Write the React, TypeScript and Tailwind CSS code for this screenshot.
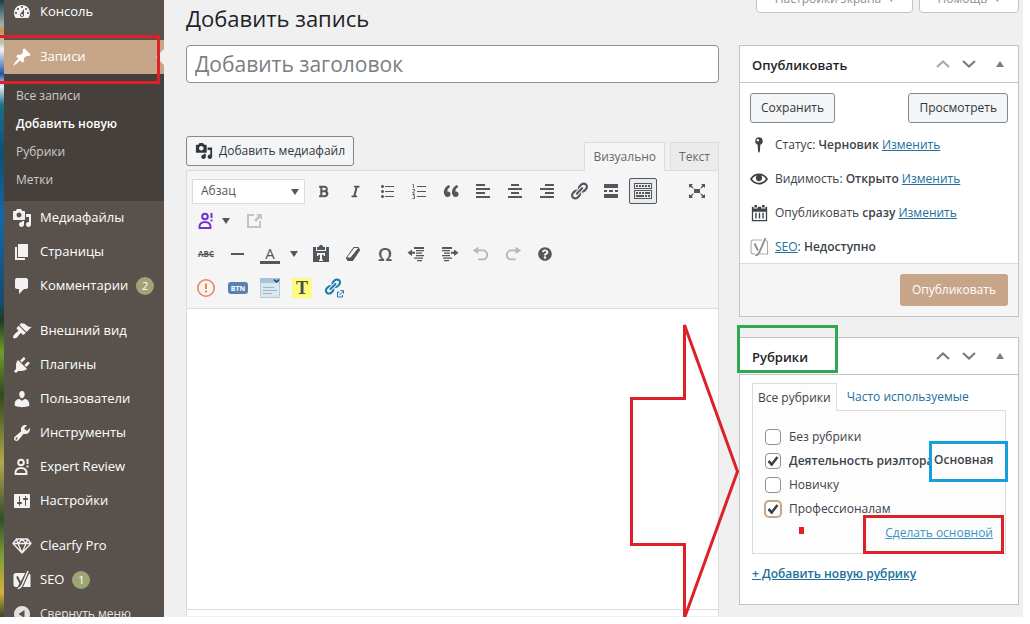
import type { ReactNode } from "react";
import { FaBold, FaItalic, FaQuestionCircle } from "react-icons/fa";

const paths = {
  dashboard:
    "M3.76 16h12.48c1.1-1.37 1.76-3.11 1.76-5 0-4.42-3.58-8-8-8s-8 3.58-8 8c0 1.89.66 3.63 1.76 5zM10 4c.55 0 1 .45 1 1s-.45 1-1 1-1-.45-1-1 .45-1 1-1zM6 6c.55 0 1 .45 1 1s-.45 1-1 1-1-.45-1-1 .45-1 1-1zm8 0c.55 0 1 .45 1 1s-.45 1-1 1-1-.45-1-1 .45-1 1-1zm-5.37 5.55L12 7v6c0 1.1-.9 2-2 2s-2-.9-2-2c0-.57.24-1.08.63-1.45zM4 10c.55 0 1 .45 1 1s-.45 1-1 1-1-.45-1-1 .45-1 1-1zm12 0c.55 0 1 .45 1 1s-.45 1-1 1-1-.45-1-1 .45-1 1-1zm-5 3c0-.55-.45-1-1-1s-1 .45-1 1 .45 1 1 1 1-.45 1-1z",
  post: "M10.44 3.02l1.82-1.82 6.36 6.35-1.83 1.82c-1.05-.68-2.48-.57-3.41.36l-.75.75c-.92.93-1.04 2.35-.35 3.41l-1.83 1.82-2.41-2.41-2.8 2.79c-.42.42-3.38 2.71-3.8 2.29s1.86-3.39 2.28-3.81l2.79-2.79L4.1 9.36l1.83-1.82c1.05.69 2.48.57 3.4-.36l.75-.75c.93-.92 1.05-2.35.36-3.41z",
  media:
    "M13 11V4c0-.55-.45-1-1-1h-1.67L9 1H5L3.67 3H2c-.55 0-1 .45-1 1v7c0 .55.45 1 1 1h10c.55 0 1-.45 1-1zM7 4.5c1.38 0 2.5 1.12 2.5 2.5S8.38 9.5 7 9.5 4.5 8.38 4.5 7 5.62 4.5 7 4.5zM14 6h5v10.5c0 1.38-1.12 2.5-2.5 2.5S14 17.88 14 16.5s1.12-2.5 2.5-2.5c.17 0 .34.02.5.05V9h-3V6zm-4 8.05V13h2v3.5c0 1.38-1.12 2.5-2.5 2.5S7 17.88 7 16.5 8.12 14 9.5 14c.17 0 .34.02.5.05z",
  page: "M6 15V2h10v13H6zm-1 1h8v2H3V5h2v11z",
  comments:
    "M5 2h9c1.1 0 2 .9 2 2v7c0 1.1-.9 2-2 2h-2l-5 5v-5H5c-1.1 0-2-.9-2-2V4c0-1.1.9-2 2-2z",
  appearance:
    "M14.48 11.06L7.41 3.99l1.5-1.5c.5-.56 2.3-.47 3.51.32 1.21.8 1.43 1.28 2.91 2.1 1.18.64 2.45 1.26 4.45.85zm-.71.71L6.7 4.7 4.93 6.47c-.39.39-.39 1.02 0 1.41l1.06 1.06c.39.39.39 1.03 0 1.42-.6.6-1.43 1.11-2.21 1.69-.35.26-.7.53-1.01.84C1.43 14.23.4 16.08 1.4 17.07c.99 1 2.84-.03 4.18-1.36.31-.31.58-.66.85-1.02.57-.78 1.08-1.61 1.69-2.21.39-.39 1.02-.39 1.41 0l1.06 1.06c.39.39 1.02.39 1.41 0z",
  plugins:
    "M13.11 4.36L9.87 7.6 8 5.73l3.24-3.24c.35-.34 1.05-.2 1.56.32.52.51.66 1.21.31 1.55zm-8 1.77l.91-1.12 9.01 9.01-1.19.84c-.71.71-2.63 1.16-3.82 1.16H6.14L4.9 17.26c-.59.59-1.54.59-2.12 0-.59-.58-.59-1.53 0-2.12l1.24-1.24v-3.88c0-1.13.4-3.19 1.09-3.89zm7.26 3.97l3.24-3.24c.34-.35 1.04-.21 1.55.31.52.51.66 1.21.31 1.55l-3.24 3.25z",
  users:
    "M10 9.25c-2.27 0-2.73-3.44-2.73-3.44C7 4.02 7.82 2 9.97 2c2.16 0 2.98 2.02 2.71 3.81 0 0-.41 3.44-2.68 3.44zm0 2.57L12.72 10c2.39 0 4.52 2.33 4.52 4.53v2.49s-3.65 1.13-7.24 1.13c-3.65 0-7.24-1.13-7.24-1.13v-2.49c0-2.25 1.94-4.48 4.47-4.48z",
  tools:
    "M16.68 9.77c-1.34 1.34-3.3 1.67-4.95.99l-5.41 6.52c-.99.99-2.59.99-3.58 0s-.99-2.59 0-3.57l6.52-5.42c-.68-1.65-.35-3.61.99-4.95 1.28-1.28 3.12-1.62 4.72-1.06l-2.89 2.89 2.82 2.82 2.86-2.87c.53 1.58.18 3.39-1.08 4.65zM3.81 16.21c.4.39 1.04.39 1.43 0 .4-.4.4-1.04 0-1.43-.39-.4-1.03-.4-1.43 0-.39.39-.39 1.03 0 1.43z",
  settings:
    "M18 16V4c0-.55-.45-1-1-1H3c-.55 0-1 .45-1 1v12c0 .55.45 1 1 1h14c.55 0 1-.45 1-1zM8 11h1c.55 0 1 .45 1 1s-.45 1-1 1H8v1.5c0 .28-.22.5-.5.5s-.5-.22-.5-.5V13H6c-.55 0-1-.45-1-1s.45-1 1-1h1V5.5c0-.28.22-.5.5-.5s.5.22.5.5V11zm5-2h-1c-.55 0-1-.45-1-1s.45-1 1-1h1V5.5c0-.28.22-.5.5-.5s.5.22.5.5V7h1c.55 0 1 .45 1 1s-.45 1-1 1h-1v5.5c0 .28-.22.5-.5.5s-.5-.22-.5-.5V9z",
  collapse: "M10 2a8 8 0 1 0 0 16 8 8 0 0 0 0-16zM12.5 6v8l-6-4z",
  ul: "M5.5 7C4.67 7 4 6.33 4 5.5 4 4.68 4.67 4 5.5 4 6.32 4 7 4.68 7 5.5 7 6.33 6.32 7 5.5 7zM8 5h9v1H8V5zm-2.5 7c-.83 0-1.5-.67-1.5-1.5C4 9.68 4.67 9 5.5 9c.82 0 1.5.68 1.5 1.5 0 .83-.68 1.5-1.5 1.5zM8 10h9v1H8v-1zm-2.5 7c-.83 0-1.5-.67-1.5-1.5 0-.82.67-1.5 1.5-1.5.82 0 1.5.68 1.5 1.5 0 .83-.68 1.5-1.5 1.5zM8 15h9v1H8v-1z",
  quote:
    "M9.49 13.22c0-.74-.2-1.38-.61-1.9-.62-.78-1.83-.88-2.53-.72-.29-1.65 1.11-3.75 2.92-4.65L7.88 4c-2.73 1.3-5.42 4.28-4.96 8.05C3.21 14.43 4.59 16 6.54 16c.85 0 1.56-.25 2.12-.75s.83-1.18.83-2.03zm8.05 0c0-.74-.2-1.38-.61-1.9-.63-.78-1.83-.88-2.53-.72-.29-1.65 1.11-3.75 2.92-4.65L15.93 4c-2.73 1.3-5.41 4.28-4.95 8.05.29 2.38 1.66 3.95 3.61 3.95.85 0 1.56-.25 2.12-.75s.83-1.18.83-2.03z",
  left: "M12 5V3H3v2h9zm5 4V7H3v2h14zm-5 4v-2H3v2h9zm5 4v-2H3v2h14z",
  center: "M14 5V3H6v2h8zm3 4V7H3v2h14zm-3 4v-2H6v2h8zm3 4v-2H3v2h14z",
  right: "M17 5V3H8v2h9zm0 4V7H3v2h14zm0 4v-2H8v2h9zm0 4v-2H3v2h14z",
  link: "M17.74 2.76c1.68 1.69 1.68 4.41 0 6.1l-1.53 1.52c-1.12 1.12-2.7 1.47-4.14 1.09l2.62-2.61.76-.77.76-.76c.84-.84.84-2.2 0-3.04-.84-.85-2.2-.85-3.04 0l-.77.76-3.38 3.38c-.37-1.44-.02-3.02 1.1-4.14l1.52-1.53c1.69-1.68 4.42-1.68 6.1 0zM8.59 13.43l5.34-5.34c.42-.42.42-1.1 0-1.52-.44-.43-1.13-.39-1.53 0l-5.33 5.34c-.42.42-.42 1.1 0 1.52.44.43 1.13.39 1.52 0zm-.76 2.29l4.14-4.15c.38 1.44.03 3.02-1.09 4.14l-1.52 1.53c-1.69 1.68-4.41 1.68-6.1 0-1.68-1.68-1.68-4.42 0-6.1l1.53-1.52c1.12-1.12 2.7-1.47 4.14-1.1l-4.14 4.15c-.85.84-.85 2.2 0 3.05.84.84 2.2.84 3.04 0z",
  more: "M17 7V3H3v4h14zM6 11V9H3v2h3zm6 0V9H8v2h4zm5 0V9h-3v2h3zm0 6v-4H3v4h14z",
  sink: "M19 2v6H1V2h18zm-1 5V3H2v4h16zM5 4v2H3V4h2zm3 0v2H6V4h2zm3 0v2H9V4h2zm3 0v2h-2V4h2zm3 0v2h-2V4h2zm2 5v9H1V9h18zm-1 8v-7H2v7h16zM5 11v2H3v-2h2zm3 0v2H6v-2h2zm3 0v2H9v-2h2zm6 0v2h-5v-2h5zm-6 3v2H3v-2h8zm3 0v2h-2v-2h2zm3 0v2h-2v-2h2z",
  expand:
    "M7 8h6v4H7zm-5 5v4h4l-1.2-1.2L7 12l-3.8 2.2M14 17h4v-4l-1.2 1.2L13 12l2.2 3.8M14 3l1.3 1.3L13 8l3.8-2.2L18 7V3M6 3H2v4l1.2-1.2L7 8 4.7 4.3",
  outdent:
    "M7 3h10v2H7zM9 6h8v1.300H9zM9 8.500h6v1.300H9zM9 11h8v1.300H9zM7 13.500h9v1.300H7zM10 16h5v1.300h-5zM5 5.500v2.300h3v2H5v2.300L.5 8.800z",
  indent:
    "M3 3h10v2H3zM3 6h8v1.300H3zM5 8.500h6v1.300H5zM3 11h8v1.300H3zM4 13.500h9v1.300H4zM5 16h5v1.300H5zM15 5.500v2.300h-3v2h3v2.300l4.500-3.300z",
  undo: "M12 5H7V2L1 6l6 4V7h5c2.2 0 4 1.8 4 4s-1.8 4-4 4H7v2h5c3.3 0 6-2.7 6-6s-2.7-6-6-6z",
  redo: "M8 5h5V2l6 4-6 4V7H8c-2.2 0-4 1.8-4 4s1.8 4 4 4h5v2H8c-3.3 0-6-2.7-6-6s2.7-6 6-6z",
  paste:
    "M12.400 3L11 1H9L7.600 3H6v3h8V3zM2 3h3v4h10V3h3v15H2zM6 9v3h1.300v-1.300H9v4.800H8V17h4v-1.500h-1v-4.800h1.700V12H14V9z",
  hr: "M3 9h13v2H3z",
  external: "M10 3v2H5v10h10v-5h2v7H3V3zM12 3h6v6l-2-2-4 4-2-2 4-4z",
  eye: "M19.7 9.4C17.7 6 14 3.9 10 3.9S2.3 6 .3 9.4L0 10l.3.6c2 3.4 5.7 5.5 9.7 5.5s7.700-2.100 9.700-5.500l.3-.6-.3-.6zM10 14.1c-3.100 0-6-1.600-7.700-4.100C3.600 8 5.700 6.600 8 6.100c-.9.6-1.500 1.700-1.500 2.900 0 1.900 1.600 3.500 3.500 3.500s3.500-1.600 3.500-3.500c0-1.200-.6-2.300-1.500-2.900 2.300.5 4.400 1.900 5.700 3.900-1.700 2.500-4.600 4.100-7.700 4.100z",
  pin: "M10 1.500a4.200 4.200 0 0 0-1.500 8.100L9 17l1 2 1-2 .5-7.400A4.200 4.200 0 0 0 10 1.500zM8.700 3.300a1.300 1.300 0 1 1 0 2.600 1.300 1.300 0 0 1 0-2.600z",
  calendar:
    "M4 0h3v3H4zM13 0h3v3h-3zM1 2h2v2h5V2h4v2h5V2h2v17H1zM2.500 8v9.500h15V8zM5 9h1.600v7H5zM9.200 9h1.600v7H9.200zM13.400 9H15v7h-1.600z",
};

type IconName = keyof typeof paths;

function Icon({ name, className = "size-5" }: { name: IconName; className?: string }) {
  return (
    <svg viewBox="0 0 20 20" fill="currentColor" fillRule="evenodd" aria-hidden="true" className={`shrink-0 ${className}`}>
      <path d={paths[name]} />
    </svg>
  );
}

function ExpertIcon() {
  return (
    <svg viewBox="0 0 20 20" fill="none" stroke="currentColor" strokeWidth="2" aria-hidden="true" className="size-5 shrink-0">
      <circle cx="9" cy="5.500" r="2.800" />
      <path d="M3.500 17c-.6-4 2-6 5.500-6s6.100 2 5.500 6z" strokeLinejoin="round" />
      <path d="M15.500 2v5M15.500 8.500v2" />
    </svg>
  );
}

function DiamondIcon() {
  return (
    <svg viewBox="0 0 20 20" fill="none" stroke="currentColor" strokeWidth="1.300" strokeLinejoin="round" aria-hidden="true" className="size-5 shrink-0">
      <path d="M4.500 3h11L19 7.500 10 17 1 7.500zM1 7.500h18M6 7.500L10 17l4-9.500M4.500 3L6 7.500 10 3l4 4.500L15.500 3" />
    </svg>
  );
}

function YoastIcon({ outline = false }: { outline?: boolean }) {
  return (
    <svg viewBox="0 0 20 20" aria-hidden="true" className="size-5 shrink-0">
      {outline ? (
        <>
          <path d="M13 3H4.500A2.500 2.500 0 0 0 2 5.500v9A2.500 2.500 0 0 0 4.500 17H6M16.500 3.200c1 .3 2 1 2 2.300V17H9.500" fill="none" stroke="#a7aaad" strokeWidth="1.100" />
          <path d="M5.500 6.500l3.500 7M16.500 1l-6 14c-.9 2.200-2 3.200-4.300 3.400" fill="none" stroke="#8c8f94" strokeWidth="1.900" />
        </>
      ) : (
        <>
          <path d="M4 3h9.500l-8 14H4a2.500 2.500 0 0 1-2.500-2.500v-9A2.500 2.500 0 0 1 4 3zM17 3.500c1 .4 1.500 1 1.500 2V17H10z" fill="currentColor" />
          <path d="M5 6.500l3.500 7" fill="none" stroke="#59524c" strokeWidth="2" />
          <path d="M16.500 0l-6.500 15c-.9 2.300-2 3.500-4.500 4" fill="none" stroke="#59524c" strokeWidth="3.600" />
          <path d="M16 1l-6 14c-.9 2.100-2 3.200-4.200 3.500" fill="none" stroke="currentColor" strokeWidth="1.500" />
        </>
      )}
    </svg>
  );
}

function MenuItem({ icon, label, count }: { icon: ReactNode; label: string; count?: number }) {
  return (
    <li>
      <a href="#" className="flex h-[34px] items-center gap-2 pl-2 text-[13px] font-medium whitespace-nowrap text-white">
        <span className="flex text-[#f3f1f1]">{icon}</span>
        <span>{label}</span>
        {count !== undefined && (
          <span className="grid size-[18px] place-items-center rounded-full bg-[#9ea476] text-[11px]">{count}</span>
        )}
      </a>
    </li>
  );
}

function Sidebar() {
  const sub = ["Все записи", "Добавить новую", "Рубрики", "Метки"];
  return (
    <nav aria-label="Меню" className="w-40 shrink-0 bg-[#59524c]">
      <ul className="-mt-[5px]">
        <MenuItem icon={<Icon name="dashboard" />} label="Консоль" />
        <li className="relative mt-[11px]">
          <a href="#" className="relative flex h-[34px] items-center gap-2 bg-[#c7a589] pl-2 text-[13px] font-medium text-white">
            <Icon name="post" />
            Записи
            <svg viewBox="0 0 8 16" aria-hidden="true" className="absolute right-0 h-4 w-2">
              <path d="M8 0L0 8l8 8z" fill="#f0f0f1" />
            </svg>
          </a>
          <span className="pointer-events-none absolute -top-[5px] right-1 -left-1 h-[49px] border-[3px] border-l-0 border-[#dc2128]" />
          <ul className="bg-[#46403c] pt-2 pb-[7px] text-xs">
            {sub.map((item, i) => (
              <li key={item}>
                <a href="#" className={`flex h-7 items-center pl-3 ${i === 1 ? "font-semibold text-white" : "text-[#cdcbc9]"}`}>
                  {item}
                </a>
              </li>
            ))}
          </ul>
        </li>
        <MenuItem icon={<Icon name="media" />} label="Медиафайлы" />
        <MenuItem icon={<Icon name="page" />} label="Страницы" />
        <MenuItem icon={<Icon name="comments" />} label="Комментарии" count={2} />
        <li aria-hidden="true" className="h-[11px]" />
        <MenuItem icon={<Icon name="appearance" />} label="Внешний вид" />
        <MenuItem icon={<Icon name="plugins" />} label="Плагины" />
        <MenuItem icon={<Icon name="users" />} label="Пользователи" />
        <MenuItem icon={<Icon name="tools" />} label="Инструменты" />
        <MenuItem icon={<ExpertIcon />} label="Expert Review" />
        <MenuItem icon={<Icon name="settings" />} label="Настройки" />
        <li aria-hidden="true" className="h-[11px]" />
        <MenuItem icon={<DiamondIcon />} label="Clearfy Pro" />
        <MenuItem icon={<YoastIcon />} label="SEO" count={1} />
        <li className="h-5 overflow-hidden">
          <button type="button" className="flex h-[34px] items-center gap-2 pl-2 text-xs text-[#e4e2e1]">
            <Icon name="collapse" />
            Свернуть меню
          </button>
        </li>
      </ul>
    </nav>
  );
}

function Tool({ label, children, className = "" }: { label: string; children: ReactNode; className?: string }) {
  return (
    <button type="button" aria-label={label} title={label} className={`grid h-[26px] w-7 shrink-0 place-items-center ${className}`}>
      {children}
    </button>
  );
}

function Caret() {
  return (
    <svg viewBox="0 0 8 6" aria-hidden="true" className="h-1.5 w-2">
      <path d="M0 0h8L4 6z" fill="#50575e" />
    </svg>
  );
}

function Toolbar() {
  return (
    <div className="border-b border-[#dcdcde] bg-[#f5f5f5] px-[5px] py-[7px] text-[#50575e]">
      <div className="flex items-center gap-1">
        <div className="relative">
          <select aria-label="Формат" className="block h-[25px] w-[113px] appearance-none border border-[#dcdcde] bg-white px-2 text-xs text-[#50575e]">
            <option>Абзац</option>
          </select>
          <span className="pointer-events-none absolute top-2.5 right-[6px]"><Caret /></span>
        </div>
        <Tool label="Полужирный"><FaBold className="size-[13px]" /></Tool>
        <Tool label="Курсив"><FaItalic className="size-[13px]" /></Tool>
        <Tool label="Маркированный список"><Icon name="ul" /></Tool>
        <Tool label="Нумерованный список">
          <svg viewBox="0 0 20 20" fill="none" stroke="currentColor" aria-hidden="true" className="size-5">
            <path d="M8 5.500h9M8 10.500h9M8 15.500h9" />
            <path d="M3.500 3.500h1V7M3.500 8.500h2v1.500l-2 2h2.200M3.500 13.500h2l-1 1.500h1v2.500h-2" strokeWidth=".9" />
          </svg>
        </Tool>
        <Tool label="Цитата"><Icon name="quote" /></Tool>
        <Tool label="По левому краю"><Icon name="left" /></Tool>
        <Tool label="По центру"><Icon name="center" /></Tool>
        <Tool label="По правому краю"><Icon name="right" /></Tool>
        <Tool label="Ссылка"><Icon name="link" /></Tool>
        <Tool label="Далее"><Icon name="more" /></Tool>
        <Tool label="Панель инструментов" className="rounded-xs border border-[#50575e] bg-[#ebebeb]"><Icon name="sink" /></Tool>
        <Tool label="Во весь экран" className="mr-0.5 ml-auto"><Icon name="expand" /></Tool>
      </div>
      <div className="mt-1 flex items-center gap-1">
        <Tool label="Expert Review" className="text-[#7132cf]"><ExpertIcon /></Tool>
        <span className="-ml-2 grid w-5 place-items-center"><Caret /></span>
        <Tool label="Открыть ссылку" className="text-[#c3c4c7]"><Icon name="external" /></Tool>
      </div>
      <div className="mt-[7px] flex items-center gap-1">
        <Tool label="Зачёркнутый"><span className="text-[8px] font-bold line-through">ABC</span></Tool>
        <Tool label="Горизонтальная линия"><Icon name="hr" /></Tool>
        <Tool label="Цвет текста">
          <span className="w-5 border-b-[3px] border-[#50575e] text-[15px] leading-4 font-medium">A</span>
        </Tool>
        <span className="-ml-1 grid w-[19px] place-items-center"><Caret /></span>
        <Tool label="Вставить как текст"><Icon name="paste" /></Tool>
        <Tool label="Очистить форматирование">
          <svg viewBox="0 0 20 20" fill="none" stroke="currentColor" strokeLinejoin="round" aria-hidden="true" className="size-5">
            <path d="M11 3.500h4l1.500 2.500-7 10.500H5L3.500 14z" strokeWidth="1.200" />
            <path d="M3.500 13.500h4L15.500 3.500l1.200 2.800-7 10.200H5z" fill="currentColor" stroke="none" />
            <path d="M11.300 4.200h3.200l-7 8.800H4.400z" fill="#f5f5f5" stroke="none" />
          </svg>
        </Tool>
        <Tool label="Произвольный символ"><span className="text-lg leading-5 font-semibold">Ω</span></Tool>
        <Tool label="Уменьшить отступ"><Icon name="outdent" /></Tool>
        <Tool label="Увеличить отступ"><Icon name="indent" /></Tool>
        <Tool label="Отменить" className="text-[#b4b6b9]"><Icon name="undo" className="size-[18px]" /></Tool>
        <Tool label="Повторить" className="text-[#b4b6b9]"><Icon name="redo" className="size-[18px]" /></Tool>
        <Tool label="Справка"><FaQuestionCircle className="size-3.5" /></Tool>
      </div>
      <div className="mt-2 flex items-center gap-1">
        <Tool label="Предупреждение">
          <svg viewBox="0 0 20 20" fill="none" stroke="#ee8354" strokeWidth="1.600" aria-hidden="true" className="size-5">
            <circle cx="10" cy="10" r="8.200" />
            <path d="M10 5.500v5.500M10 12.500v2" strokeWidth="2" />
          </svg>
        </Tool>
        <Tool label="Кнопка">
          <span className="grid h-3 w-5 place-items-center rounded-[3px] bg-[#5b7fae] text-[7px] leading-none font-bold text-white">BTN</span>
        </Tool>
        <Tool label="Контактная форма">
          <svg viewBox="0 0 20 20" aria-hidden="true" className="size-5">
            <path d="M.5.500h19v19H.5z" fill="#d9e7f1" stroke="#b4cbdb" />
            <path d="M0 0h20v5H0z" fill="#a9c3d4" />
            <path d="M14 1.500l2.500 2.500L19 1.500" fill="none" stroke="#28455c" strokeWidth="1.500" />
            <path d="M3 9.500h11M3 12.500h14M3 15.500h9" stroke="#9db4c4" />
          </svg>
        </Tool>
        <Tool label="Типограф">
          <span className="grid size-5 place-items-center bg-[#fdfc81] font-['Liberation_Serif',serif] text-lg leading-5 font-bold text-[#4d4d44]">T</span>
        </Tool>
        <Tool label="Внешняя ссылка" className="text-[#1879ad]">
          <svg viewBox="0 0 20 20" fill="currentColor" aria-hidden="true" className="size-5">
            <path d={paths.link} transform="translate(-1 -1) scale(.95)" />
            <path d="M12 12h8v8h-8z" fill="#f5f5f5" />
            <path d="M15.500 14H13.500v5H18.500V17M15.500 17l4-4M16.500 12.600h3v3" fill="none" stroke="currentColor" />
          </svg>
        </Tool>
      </div>
    </div>
  );
}

function Editor() {
  return (
    <main className="min-w-0 flex-1">
      <h1 className="mt-1 text-[22px] leading-7 text-[#1d2327]">Добавить запись</h1>
      <input
        aria-label="Добавить заголовок"
        placeholder="Добавить заголовок"
        className="mt-[13px] block h-[38px] w-full rounded border border-[#8c8f94] bg-white px-2 text-[21px] text-[#2c3338] placeholder:text-[#7b7e7e]"
      />
      <div className="mt-[53px] flex h-[34px] items-start justify-between">
        <button type="button" className="flex h-[30px] items-center gap-1.5 rounded-[3px] border border-[#7e8993] bg-[#f3f5f6] px-2 text-xs whitespace-nowrap text-[#32373c]">
          <Icon name="media" className="size-[18px]" />
          Добавить медиафайл
        </button>
        <div className="relative z-10 flex items-end gap-[5px] self-end text-xs text-[#646970]">
          <button type="button" className="-mb-px h-[29px] border border-b-0 border-[#dcdcde] bg-[#f5f5f5] px-2">Визуально</button>
          <button type="button" className="h-7 border border-b-0 border-[#dcdcde] bg-[#ebebeb] px-2">Текст</button>
        </div>
      </div>
      <div className="border border-b-0 border-[#dcdcde] bg-white">
        <Toolbar />
        <textarea aria-label="Текст записи" className="block h-[300px] w-full resize-none outline-none" />
        <div className="h-[7px] border-t border-[#dcdcde]" />
      </div>
    </main>
  );
}

function BoxHeader({ title, dim = false }: { title: string; dim?: boolean }) {
  return (
    <div className="flex h-[37px] items-center border-b border-[#c3c4c7] pr-3.5 pl-3 text-[#787c82]">
      <h2 className="flex-1 pt-[3px] text-[13px] font-semibold text-[#1d2327]">{title}</h2>
      <button type="button" aria-label="Вверх" className={`w-[26px] ${dim ? "text-[#a7aaad]" : ""}`}>
        <svg viewBox="0 0 14 8" fill="none" stroke="currentColor" strokeWidth="2.200" className="h-2 w-3.5"><path d="M1 7l6-5.500L13 7" /></svg>
      </button>
      <button type="button" aria-label="Вниз" className="w-[34px]">
        <svg viewBox="0 0 14 8" fill="none" stroke="currentColor" strokeWidth="2.200" className="h-2 w-3.5"><path d="M1 1l6 5.500L13 1" /></svg>
      </button>
      <button type="button" aria-label="Свернуть">
        <svg viewBox="0 0 8 6" fill="currentColor" className="h-1.5 w-2"><path d="M0 6h8L4 0z" /></svg>
      </button>
    </div>
  );
}

function InfoRow({ icon, children }: { icon: ReactNode; children: ReactNode }) {
  return (
    <li className="flex h-[34px] items-center gap-[7px] whitespace-nowrap">
      <span className="flex w-[18px] justify-center text-[#3f4347]">{icon}</span>
      <span>{children}</span>
    </li>
  );
}

const linkClass = "text-[#21709c] underline";

function PublishBox() {
  return (
    <section className="border border-[#c3c4c7] bg-white text-xs text-[#3c434a]">
      <BoxHeader title="Опубликовать" dim />
      <div className="flex justify-between px-2.5 pt-2.5">
        <button type="button" className="h-[30px] rounded-[3px] border border-[#7e8993] bg-[#f3f5f6] px-2.5 text-[#32373c]">Сохранить</button>
        <button type="button" className="h-[30px] rounded-[3px] border border-[#7e8993] bg-[#f3f5f6] px-2.5 text-[#32373c]">Просмотреть</button>
      </div>
      <ul className="mt-[5px] -mb-px px-2.5">
        <InfoRow icon={<Icon name="pin" className="size-[18px]" />}>
          Статус: <b className="font-semibold">Черновик</b> <a href="#" className={linkClass}>Изменить</a>
        </InfoRow>
        <InfoRow icon={<Icon name="eye" className="size-[18px]" />}>
          Видимость: <b className="font-semibold">Открыто</b> <a href="#" className={linkClass}>Изменить</a>
        </InfoRow>
        <InfoRow icon={<Icon name="calendar" className="size-[17px]" />}>
          Опубликовать <b className="font-semibold">сразу</b> <a href="#" className={linkClass}>Изменить</a>
        </InfoRow>
        <InfoRow icon={<YoastIcon outline />}>
          <a href="#" className={linkClass}>SEO</a>: <b className="font-semibold">Недоступно</b>
        </InfoRow>
      </ul>
      <div className="flex justify-end border-t border-[#dcdcde] bg-[#f5f5f5] p-2.5">
        <button type="button" className="h-8 rounded-[3px] bg-[#c7a589] px-3 font-medium text-white">Опубликовать</button>
      </div>
    </section>
  );
}

function Category({ label, checked = false, strong = false, focus = false }: { label: string; checked?: boolean; strong?: boolean; focus?: boolean }) {
  return (
    <label className={`flex h-6 items-center gap-2 whitespace-nowrap ${strong ? "font-semibold" : ""}`}>
      <span className="relative grid size-4">
        <input
          type="checkbox"
          defaultChecked={checked}
          className={`peer size-4 appearance-none rounded border bg-white ${focus ? "border-[#c7a589] ring-1 ring-[#c7a589]" : "border-[#8c8f94]"}`}
        />
        <svg viewBox="0 0 16 16" fill="none" stroke="#3c434a" strokeWidth="2.600" aria-hidden="true" className="pointer-events-none absolute inset-0 hidden size-4 peer-checked:block">
          <path d="M3.500 8l3.200 3.500L12.500 4" />
        </svg>
      </span>
      {label}
    </label>
  );
}

function CategoriesBox() {
  return (
    <section className="relative mt-5 h-[268px] border border-[#c3c4c7] bg-white text-xs text-[#3c434a]">
      <BoxHeader title="Рубрики" />
      <span className="pointer-events-none absolute -top-[13px] -left-[3px] h-[48px] w-[101px] border-[3px] border-[#2fa84f]" />
      <div className="px-3 pt-2">
        <div className="relative z-10 flex whitespace-nowrap">
          <button type="button" className="-mb-px h-7 border border-b-0 border-[#dcdcde] bg-[#fdfdfd] px-[5px]">Все рубрики</button>
          <button type="button" className="h-[27px] px-2.5 text-[#21709c]">Часто используемые</button>
        </div>
        <div className="relative h-[144px] border border-[#dcdcde] bg-[#fdfdfd] px-3 pt-3.5">
          <Category label="Без рубрики" />
          <Category label="Деятельность риэлтора" checked strong />
          <Category label="Новичку" />
          <Category label="Профессионалам" checked focus />
          <div className="flex h-6 items-center justify-end">
            <a href="#" className="text-[#3a95c4] underline">Сделать основной</a>
          </div>
          <span className="absolute top-[30px] -right-[3px] h-[41px] w-[79px] border-[3px] border-[#169fda] bg-[#fdfdfd] pt-2 pl-0.5 leading-4 font-semibold">
            Основная
          </span>
          <span className="pointer-events-none absolute top-[104px] right-px h-[39px] w-[141px] border-[3px] border-[#dc2128]" />
          <span className="absolute top-[116px] left-[46px] h-[7px] w-[5px] bg-[#ed1c24]" />
        </div>
        <a href="#" className="mt-2.5 inline-block leading-5 font-semibold text-[#21709c] underline">+ Добавить новую рубрику</a>
      </div>
    </section>
  );
}

function SidePanels() {
  return (
    <aside className="relative w-[280px] shrink-0">
      <div className="flex h-[13px] items-end justify-end gap-1.5 overflow-hidden text-xs text-[#8c8f94]">
        <button type="button" className="flex h-7 w-[157px] shrink-0 items-center justify-center gap-2 rounded-b border border-[#c3c4c7] bg-white">
          Настройки экрана <span className="text-[9px]">▾</span>
        </button>
        <button type="button" className="flex h-7 w-[100px] shrink-0 items-center justify-center gap-2 rounded-b border border-[#c3c4c7] bg-white">
          Помощь <span className="text-[9px]">▾</span>
        </button>
      </div>
      <div className="mt-8">
        <PublishBox />
        <CategoriesBox />
      </div>
      <svg viewBox="0 0 112 300" fill="none" stroke="#dc2128" strokeWidth="3" aria-hidden="true" className="pointer-events-none absolute top-[322px] -left-[111px] z-20 h-[300px] w-28">
        <path d="M56.500 3v73.500h-53v146h53V296L109.500 149.500z" />
      </svg>
    </aside>
  );
}

export default function App() {
  return (
    <div className="relative bg-white pr-[7px] font-['Open_Sans','Noto_Sans',sans-serif]">
      <div className="flex bg-[#f0f0f1]">
        <div className="w-1 shrink-0 bg-[linear-gradient(#1d3d4c_0%,#9bb5a9_4%,#d98a4b_5%,#b8c9bd_7%,#f4f4f4_8%,#2455a4_12%,#e8eef2_14%,#1d6f8a_17%,#0f4f70_25%,#1668a8_35%,#174a6b_49%,#1f3b20_52%,#6f9c2d_57%,#31481f_64%,#b3a94c_75%,#2f4f2c_84%,#7f9a3c_90%,#d8b03a_96%,#31482a_100%)]" />
        <Sidebar />
        <div className="flex min-w-0 flex-1 gap-5 pr-1 pl-[22px]">
          <Editor />
          <SidePanels />
        </div>
      </div>
    </div>
  );
}
